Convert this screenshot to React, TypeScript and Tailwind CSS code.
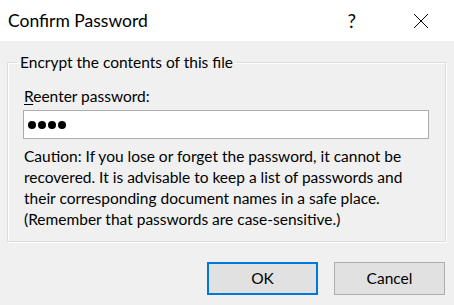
export default function App() {
  return (
    <div className="flex h-[305px] w-[454px] flex-col bg-[#f0f0f0] font-['Lato',sans-serif] text-[15.5px] leading-[21px] text-black">
      <header className="flex h-[41px] items-center bg-white">
        <span className="ml-[8px] text-[17.5px] leading-none">Confirm Password</span>
        <span className="ml-auto mr-[57px] text-[19px] leading-none">?</span>
        <svg
          className="mr-[25px]"
          width="16"
          height="16"
          viewBox="0 0 16 16"
          fill="none"
          stroke="#000"
          strokeWidth="1"
        >
          <path d="M1 1 L15 15 M15 1 L1 15" />
        </svg>
      </header>

      <fieldset className="ml-[7px] mt-[11px] h-[190px] w-[438px] border border-[#dcdcdc] pb-[10px] shadow-[1px_1px_0_#fff,inset_1px_1px_0_#fff]">
        <legend className="ml-[9px] px-[3px]">Encrypt the contents of this file</legend>
        <div className="px-[16px]">
          <label className="mt-[13px] block">
            <span className="underline decoration-1 underline-offset-2">R</span>eenter password:
          </label>
          <div className="-ml-[1px] mt-[3px] flex h-[29px] w-[406px] items-center gap-[2px] border border-[#adadad] bg-white pl-[4px]">
            {[0, 1, 2, 3].map((i) => (
              <span key={i} className="h-[8px] w-[8px] rounded-full bg-black" />
            ))}
          </div>
          <p className="mt-[7px] whitespace-nowrap">
            Caution: If you lose or forget the password, it cannot be
            <br />
            recovered. It is advisable to keep a list of passwords and
            <br />
            their corresponding document names in a safe place.
            <br />
            (Remember that passwords are case-sensitive.)
          </p>
        </div>
      </fieldset>

      <div className="mr-[9px] mt-[20px] flex justify-end gap-[16px]">
        <button className="h-[33px] w-[111px] border-2 border-[#0078d7] bg-[#e1e1e1]">OK</button>
        <button className="h-[33px] w-[111px] border border-[#adadad] bg-[#e1e1e1]">Cancel</button>
      </div>
    </div>
  );
}
